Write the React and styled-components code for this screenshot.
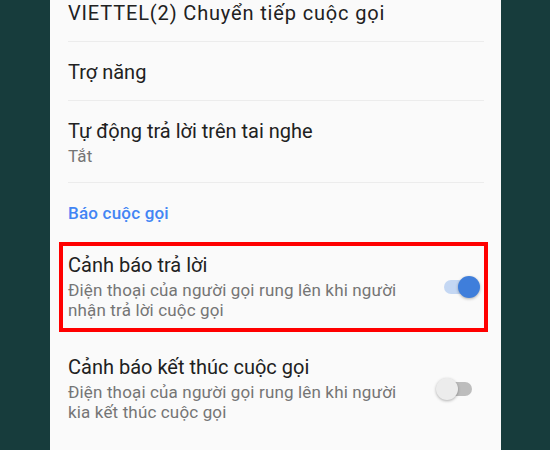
import React from 'react';
import styled, { createGlobalStyle } from 'styled-components';

const GlobalStyle = createGlobalStyle`
  html, body {
    margin: 0;
    padding: 0;
    background: #173c3c;
    font-family: Roboto, "Noto Sans", "Liberation Sans", sans-serif;
  }
`;

const Screen = styled.div`
  width: 550px;
  height: 450px;
  overflow: hidden;
  background: #173c3c;
`;

const Panel = styled.div`
  width: 451px;
  height: 450px;
  margin-left: 50px;
  background: #fafafa;
  padding: 0 17px 0 18px;
  box-sizing: border-box;
  overflow: hidden;
`;

// list is scrolled a little, so the first row is partly hidden
const List = styled.div`
  margin-top: -17px;
  display: flex;
  flex-direction: column;
`;

const Row = styled.div`
  position: relative;
  display: flex;
  align-items: center;
  padding: ${p => (p.divided ? '18px 0 16px' : '18px 0 17px')};
  border-bottom: ${p => (p.divided ? '1px solid #ececec' : 'none')};

  ${p =>
    p.highlighted &&
    `
    &::after {
      content: '';
      position: absolute;
      left: -9px;
      right: -4px;
      top: 7px;
      bottom: 5px;
      border: 4px solid #ff0000;
      pointer-events: none;
    }
  `}
`;

const TextBlock = styled.div`
  flex: 1;
  max-width: 352px;
  min-width: 0;
`;

const Title = styled.div`
  font-size: 20px;
  line-height: 24px;
  letter-spacing: ${p => (p.wide ? '0.85px' : '0')};
  color: #212121;
  white-space: nowrap;
`;

const Summary = styled.div`
  margin-top: 3px;
  font-size: 17px;
  line-height: 20px;
  letter-spacing: 0.15px;
  color: #757575;
`;

const Category = styled.div`
  padding: 20px 0 12px;
  font-size: 17px;
  line-height: 20px;
  letter-spacing: 0.2px;
  font-weight: 500;
  color: #4285f4;
`;

const Switch = styled.div`
  position: relative;
  width: 44px;
  height: 22px;
  margin-left: auto;
  margin-right: 4px;
  flex-shrink: 0;
`;

const Track = styled.div`
  position: absolute;
  left: 8px;
  top: 4px;
  width: 28px;
  height: 14px;
  border-radius: 7px;
  background: ${p => (p.on ? '#c4d7f3' : '#bdbdbd')};
`;

const Thumb = styled.div`
  position: absolute;
  top: 0;
  left: ${p => (p.on ? '22px' : '0')};
  width: 22px;
  height: 22px;
  border-radius: 50%;
  background: ${p => (p.on ? '#3f7edb' : '#ececec')};
  box-shadow: 0 1px 3px rgba(0, 0, 0, 0.3);
`;

function Toggle({ on }) {
  return (
    <Switch>
      <Track on={on ? 1 : 0} />
      <Thumb on={on ? 1 : 0} />
    </Switch>
  );
}

const settings = [
  { title: 'VIETTEL(2) Chuyển tiếp cuộc gọi', wide: true },
  { title: 'Trợ năng' },
  { title: 'Tự động trả lời trên tai nghe', summary: 'Tắt' },
];

const alerts = [
  {
    title: 'Cảnh báo trả lời',
    summary: 'Điện thoại của người gọi rung lên khi người nhận trả lời cuộc gọi',
    on: true,
    highlighted: true,
  },
  {
    title: 'Cảnh báo kết thúc cuộc gọi',
    summary: 'Điện thoại của người gọi rung lên khi người kia kết thúc cuộc gọi',
    on: false,
  },
];

export default function App() {
  return (
    <>
      <GlobalStyle />
      <Screen>
        <Panel>
          <List>
            {settings.map((item, i) => (
              <Row key={i} divided>
                <TextBlock>
                  <Title wide={item.wide ? 1 : 0}>{item.title}</Title>
                  {item.summary && <Summary>{item.summary}</Summary>}
                </TextBlock>
              </Row>
            ))}

            <Category>Báo cuộc gọi</Category>

            {alerts.map((item, i) => (
              <Row key={i} highlighted={item.highlighted}>
                <TextBlock>
                  <Title>{item.title}</Title>
                  <Summary>{item.summary}</Summary>
                </TextBlock>
                <Toggle on={item.on} />
              </Row>
            ))}
          </List>
        </Panel>
      </Screen>
    </>
  );
}
